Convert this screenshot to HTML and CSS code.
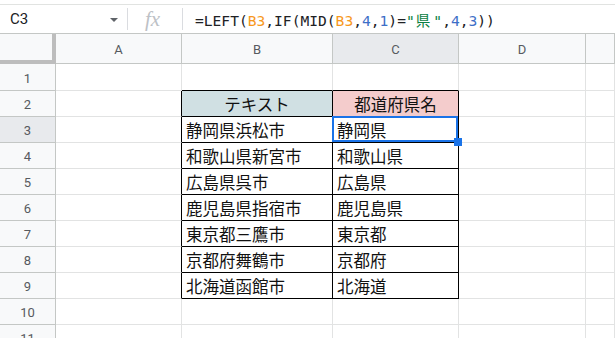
FILE: index.html
```html
<!DOCTYPE html>
<html lang="ja">
<head>
	<meta charset="utf-8">
	<title>都道府県名の抽出</title>
	<link rel="stylesheet" href="styles.css">
</head>
<body>
	<div class="fbar">
		<div class="namebox"><span>C3</span><span class="caret"></span></div>
		<div class="sep"></div>
		<div class="fx">fx</div>
		<div class="sep"></div>
		<div class="formula">=LEFT(<span class="ref">B3</span>,IF(MID(<span class="ref">B3</span>,<span class="num">4</span>,<span class="num">1</span>)=<span class="str">"<span class="wide">県</span>"</span>,<span class="num">4</span>,<span class="num">3</span>))</div>
	</div>

	<div class="sheet">
		<!-- column headers -->
		<div class="corner"></div>
		<div class="colhead">A</div>
		<div class="colhead">B</div>
		<div class="colhead active">C</div>
		<div class="colhead">D</div>
		<div class="colhead"></div>

		<!-- 1 -->
		<div class="rowhead r1">1</div>
		<div class="cell r1"></div>
		<div class="cell r1 bt"></div>
		<div class="cell r1 bt"></div>
		<div class="cell r1"></div>
		<div class="cell r1"></div>

		<!-- 2 -->
		<div class="rowhead">2</div>
		<div class="cell bl"></div>
		<div class="cell bx hd head-b">テキスト</div>
		<div class="cell bx hd head-c">都道府県名</div>
		<div class="cell"></div>
		<div class="cell"></div>

		<!-- 3 -->
		<div class="rowhead active">3</div>
		<div class="cell bl"></div>
		<div class="cell bx">静岡県浜松市</div>
		<div class="cell bx selected">静岡県</div>
		<div class="cell"></div>
		<div class="cell"></div>

		<!-- 4 -->
		<div class="rowhead">4</div>
		<div class="cell bl"></div>
		<div class="cell bx">和歌山県新宮市</div>
		<div class="cell bx">和歌山県</div>
		<div class="cell"></div>
		<div class="cell"></div>

		<!-- 5 -->
		<div class="rowhead">5</div>
		<div class="cell bl"></div>
		<div class="cell bx">広島県呉市</div>
		<div class="cell bx">広島県</div>
		<div class="cell"></div>
		<div class="cell"></div>

		<!-- 6 -->
		<div class="rowhead">6</div>
		<div class="cell bl"></div>
		<div class="cell bx">鹿児島県指宿市</div>
		<div class="cell bx">鹿児島県</div>
		<div class="cell"></div>
		<div class="cell"></div>

		<!-- 7 -->
		<div class="rowhead">7</div>
		<div class="cell bl"></div>
		<div class="cell bx">東京都三鷹市</div>
		<div class="cell bx">東京都</div>
		<div class="cell"></div>
		<div class="cell"></div>

		<!-- 8 -->
		<div class="rowhead">8</div>
		<div class="cell bl"></div>
		<div class="cell bx">京都府舞鶴市</div>
		<div class="cell bx">京都府</div>
		<div class="cell"></div>
		<div class="cell"></div>

		<!-- 9 -->
		<div class="rowhead">9</div>
		<div class="cell bl"></div>
		<div class="cell bx">北海道函館市</div>
		<div class="cell bx">北海道</div>
		<div class="cell"></div>
		<div class="cell"></div>

		<!-- 10 -->
		<div class="rowhead">10</div>
		<div class="cell"></div>
		<div class="cell"></div>
		<div class="cell"></div>
		<div class="cell"></div>
		<div class="cell"></div>

		<!-- 11 -->
		<div class="rowhead">11</div>
		<div class="cell"></div>
		<div class="cell"></div>
		<div class="cell"></div>
		<div class="cell"></div>
		<div class="cell"></div>
	</div>
</body>
</html>
```

FILE: styles.css
```css
html, body {
	margin: 0;
	padding: 0;
	background: #fff;
	overflow: hidden;
}
body {
	font-family: Roboto, "Noto Sans CJK JP", sans-serif;
	color: #202124;
}

/* formula bar */
.fbar {
	display: flex;
	align-items: center;
	margin-top: 4px;
	height: 28px;
	border-top: 1px solid #e1e3e1;
	border-bottom: 1px solid #c4c7c5;
}
.namebox {
	width: 127px;
	box-sizing: border-box;
	padding: 0 9px 0 10px;
	display: flex;
	align-items: center;
	justify-content: space-between;
	font-size: 15px;
}
.caret {
	width: 0;
	height: 0;
	border-left: 4px solid transparent;
	border-right: 4px solid transparent;
	border-top: 4px solid #5f6368;
	margin-top: 2px;
}
.sep {
	width: 1px;
	height: 22px;
	background: #dadce0;
}
.fx {
	width: 54px;
	text-align: center;
	padding-right: 5px;
	box-sizing: border-box;
	font-family: "Liberation Serif", serif;
	font-style: italic;
	font-size: 21px;
	color: #bdc1c6;
}
.formula {
	padding-left: 12px;
	font-family: "DejaVu Sans Mono", "Noto Sans CJK JP", monospace;
	font-size: 14.6px;
	white-space: pre;
	color: #202124;
}
.ref { color: #f7981d; }
.num { color: #3d6fc7; }
.str { color: #0b8043; }
.wide { margin: 0 3px 0 1px; }

/* sheet grid */
.sheet {
	display: grid;
	grid-template-columns: 56px 126px 151px 126px 127px 1fr;
	grid-template-rows: 30px 27px repeat(10, 26px);
}
.sheet > div {
	box-sizing: border-box;
	border-right: 1px solid #e2e3e3;
	border-bottom: 1px solid #e2e3e3;
}
.corner {
	background: #f8f9fa;
	border-right: 4px solid #bdbdbd !important;
	border-bottom: 4px solid #bdbdbd !important;
}
.colhead, .rowhead {
	background: #f8f9fa;
	display: flex;
	align-items: center;
	justify-content: center;
	font-size: 13px;
	color: #575a5f;
	border-color: #c4c7c5 !important;
}
.colhead { padding-top: 1px; }
.rowhead { padding-top: 2px; }
.colhead.active, .rowhead.active {
	background: #e8eaed;
}

.cell {
	display: flex;
	align-items: center;
	padding: 1px 0 0 4px;
	font-family: "Noto Sans CJK JP", sans-serif;
	font-size: 16.5px;
	color: #111;
	white-space: nowrap;
}
.cell.bx {
	border-right-color: #000;
	border-bottom-color: #000;
}
.cell.bl { border-right-color: #000; }
.cell.bt { border-bottom-color: #000; }
.cell.hd {
	justify-content: center;
	padding-left: 0;
}
.head-b { background: #d0e0e3; }
.head-c { background: #f4cccc; }

/* active cell outline */
.selected {
	position: relative;
}
.selected::after {
	content: "";
	position: absolute;
	top: -1px;
	left: -1px;
	right: 0;
	bottom: 0;
	border: 2px solid #1a73e8;
}
.selected::before {
	content: "";
	position: absolute;
	right: -4px;
	bottom: -4px;
	width: 8px;
	height: 8px;
	background: #1a73e8;
	z-index: 1;
}
```
